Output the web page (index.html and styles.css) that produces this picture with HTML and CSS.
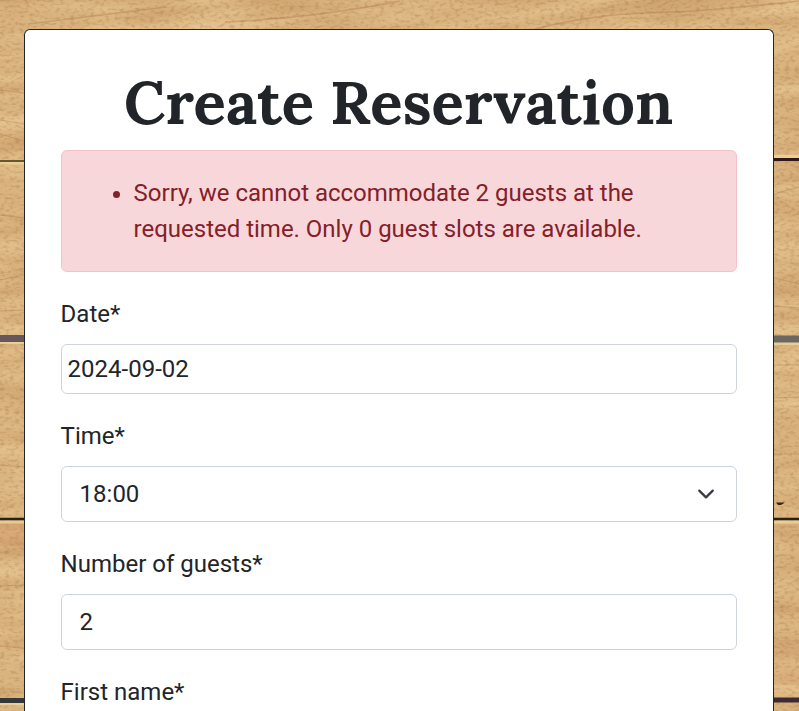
FILE: index.html
```html
<!DOCTYPE html>
<html lang="en">
<head>
  <meta charset="utf-8">
  <title>Create Reservation</title>
  <link rel="stylesheet" href="styles.css">
</head>
<body>
  <svg class="wood" viewBox="0 0 799 711" preserveAspectRatio="none" aria-hidden="true">
    <defs>
      <filter id="grain" x="0" y="0" width="100%" height="100%" color-interpolation-filters="sRGB">
        <feTurbulence type="fractalNoise" baseFrequency="0.008 0.05" numOctaves="4" seed="8"/>
        <feColorMatrix values="0.14 0 0 0 0.79  0.2 0 0 0 0.61  0.2 0 0 0 0.4  0 0 0 0 1"/>
      </filter>
      <filter id="speckle" x="0" y="0" width="100%" height="100%" color-interpolation-filters="sRGB">
        <feTurbulence type="fractalNoise" baseFrequency="0.2 0.35" numOctaves="2" seed="5"/>
        <feColorMatrix values="0 0 0 0 0.5  0 0 0 0 0.34  0 0 0 0 0.2  0.7 0 0 0 -0.33"/>
      </filter>
    </defs>
    <g transform="rotate(-5 400 15)">
      <rect x="-40" y="-60" width="880" height="260" filter="url(#grain)"/>
    </g>
    <rect y="160" width="799" height="551" filter="url(#grain)"/>
    <rect width="799" height="711" filter="url(#speckle)"/>
    <g fill="none" stroke="#aa7045" stroke-opacity=".35">
      <path d="M28 24Q95 16 166 7M225 22Q315 18 400 1M535 29Q594 14 649 13T799 1" stroke-width="1.5"/>
      <path d="M0 90L24 93M0 120L24 124M0 134L24 141M0 215L24 218M0 280L24 275M0 311L24 310M0 465L24 467M0 586L24 585M0 646L24 648"/>
      <path d="M774 194L799 187M774 278L799 284M774 306L799 308M774 365H799M774 398L799 397M774 454H799"/>
    </g>
    <rect y="521" width="24" height="25" fill="#ce8c5c" opacity=".3"/>
    <rect x="774" y="640" width="25" height="45" fill="#bd7c52" opacity=".18"/>
    <g class="seams">
      <path d="M0 163H24M774 156.500H799M0 342.500H24M774 343.500H799M0 522H24M774 522H799M0 703.500H24" stroke="#efd99d" stroke-width="3" opacity=".75"/>
      <path d="M0 161H24" stroke="#69552e" stroke-width="2"/>
      <path d="M774 159.500H799" stroke="#30171c" stroke-width="3"/>
      <path d="M0 338.500H24" stroke="#65575b" stroke-width="7"/>
      <path d="M774 339H799" stroke="#6b6762" stroke-width="7"/>
      <path d="M0 519H24M774 519H799" stroke="#292018" stroke-width="2.500"/>
      <path d="M0 700.500H24" stroke="#363738" stroke-width="5"/>
      <path d="M774 700H799" stroke="#3c2b32" stroke-width="5"/>
    </g>
    <path d="M776 502.500L785 502.500L781 505H778Z" fill="#392611"/>
  </svg>

  <main class="card">
    <h1 class="title">Create Reservation</h1>
    <div class="alert" role="alert">
      <ul class="errors">
        <li>Sorry, we cannot accommodate 2 guests at the requested time. Only 0 guest slots are available.</li>
      </ul>
    </div>
    <form class="form">
      <div class="field">
        <label for="date">Date*</label>
        <input class="control control-date" id="date" type="text" value="2024-09-02">
      </div>
      <div class="field">
        <label for="time">Time*</label>
        <div class="select-wrap">
          <select class="control" id="time"><option>18:00</option></select>
          <svg class="chevron" viewBox="0 0 16 16" aria-hidden="true"><path d="m2 5 6 6 6-6"/></svg>
        </div>
      </div>
      <div class="field">
        <label for="guests">Number of guests*</label>
        <input class="control" id="guests" type="text" value="2">
      </div>
      <div class="field">
        <label>First name*</label>
      </div>
    </form>
  </main>
</body>
</html>
```

FILE: styles.css
```css
* { box-sizing: border-box; }

body {
  margin: 0;
  height: 711px;
  overflow: hidden;
  padding: 29px 25.4px 0 23.6px;
  background: #d9b075;
  color: #212529;
  font: 400 24px/36px Roboto, sans-serif;
}

.wood {
  position: absolute;
  inset: 0;
  width: 100%;
  height: 100%;
  z-index: -1;
}

.card {
  height: 682px;
  padding: 36px 36px 0;
  background: #fff;
  border: 1px solid #212529;
  border-bottom: 0;
  border-radius: 6px 6px 0 0;
}

.title {
  margin: 0 0 12px;
  font: 700 60px/72px Lora, "Liberation Serif", serif;
  text-align: center;
  white-space: nowrap;
}

.alert {
  margin-bottom: 24px;
  padding: 24px;
  color: #842029;
  background: #f8d7da;
  border: 1px solid #f5c2c7;
  border-radius: 6px;
}

.errors {
  margin: 0;
  padding-left: 48px;
  letter-spacing: -0.01px;
}

.form { display: grid; gap: 24px; }

.field { display: grid; gap: 12px; }

.control {
  display: block;
  width: 100%;
  height: 56px;
  margin: 0;
  padding: 9px 18px;
  color: inherit;
  font: inherit;
  background: #fff;
  border: 1px solid #ced4da;
  border-radius: 6px;
  appearance: none;
}

.control-date { height: 50px; padding: 6px; }

.select-wrap { position: relative; }

.chevron {
  position: absolute;
  top: 19px;
  right: 22px;
  width: 18px;
  height: 18px;
  fill: none;
  stroke: #343a40;
  stroke-width: 2;
  stroke-linecap: round;
  stroke-linejoin: round;
}
```
